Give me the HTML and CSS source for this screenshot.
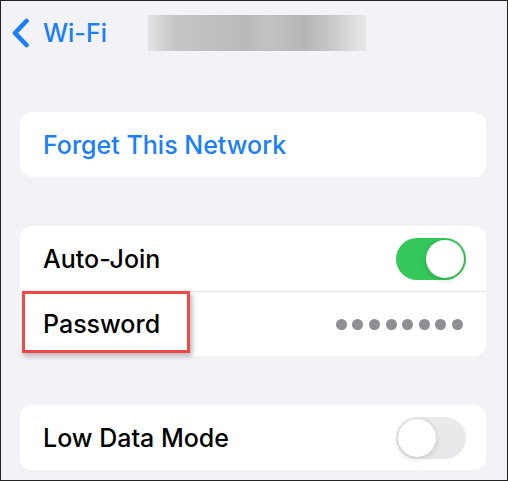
FILE: index.html
```html
<!DOCTYPE html>
<html lang="en">
<head>
    <meta charset="UTF-8">
    <meta name="viewport" content="width=device-width, initial-scale=1.0">
    <title>Wi-Fi Network</title>
    <link rel="stylesheet" href="styles.css">
</head>
<body>
    <div class="screen">
        <div class="nav">
            <a class="back" href="#">
                <svg class="chevron" width="20" height="30" viewBox="0 0 20 30">
                    <path d="M15.5 3 L4 15 L15.5 27" fill="none" stroke="#1a7ff8" stroke-width="4.6" stroke-linecap="round" stroke-linejoin="round"/>
                </svg>
                <span>Wi-Fi</span>
            </a>
            <!-- network name is hidden -->
            <div class="ssid-blur"></div>
        </div>

        <div class="card">
            <div class="row">
                <span class="link">Forget This Network</span>
            </div>
        </div>

        <div class="card card-annotated">
            <div class="row">
                <span class="label">Auto-Join</span>
                <div class="toggle on"><div class="knob"></div></div>
            </div>
            <div class="divider"></div>
            <div class="row row-short">
                <span class="label">Password</span>
                <div class="dots">
                    <i></i><i></i><i></i><i></i><i></i><i></i><i></i><i></i>
                </div>
            </div>
            <div class="highlight"></div>
        </div>

        <div class="card">
            <div class="row">
                <span class="label">Low Data Mode</span>
                <div class="toggle"><div class="knob"></div></div>
            </div>
        </div>
    </div>
</body>
</html>
```

FILE: styles.css
```css
body {
    margin: 0;
    font-family: Inter, "Liberation Sans", sans-serif;
}
.screen {
    width: 508px;
    height: 481px;
    box-sizing: border-box;
    border: 1px solid #222;
    background: #f2f2f7;
    padding: 14px 21px 0 19px;
    overflow: hidden;
}
.nav {
    display: flex;
    align-items: center;
    height: 36px;
    margin-left: -9px;
    margin-bottom: 61px;
}
.back {
    display: flex;
    align-items: center;
    gap: 12px;
    color: #1a7ff8;
    text-decoration: none;
    font-size: 25px;
    font-weight: 500;
    width: 137px;
}
.ssid-blur {
    width: 218px;
    height: 36px;
    background: linear-gradient(90deg, #e2e2e4 0%, #c6c6c8 12%, #bfbfc2 30%, #b9b9bc 45%, #c3c3c6 55%, #b5b5b8 72%, #cacacc 85%, #e8e8ea 100%);
    filter: blur(0.6px);
}
.card {
    background: #fff;
    border-radius: 12px;
    margin-bottom: 49px;
}
.card-annotated {
    position: relative;
    margin-bottom: 49px;
}
.row {
    display: flex;
    align-items: center;
    justify-content: space-between;
    height: 65px;
    padding: 0 20px 0 23px;
}
.row-short {
    height: 64px;
}
.link {
    color: #1a7ff8;
    font-size: 25px;
    font-weight: 500;
}
.label {
    color: #000;
    font-size: 25px;
    font-weight: 500;
}
.divider {
    height: 1px;
    background: #e3e3e8;
    margin-left: 23px;
}
.toggle {
    width: 70px;
    height: 42px;
    border-radius: 21px;
    background: #e9e9eb;
    display: flex;
    align-items: center;
    padding: 0 2px;
    box-sizing: border-box;
}
.toggle.on {
    background: #34c759;
    justify-content: flex-end;
}
.knob {
    width: 38px;
    height: 38px;
    border-radius: 50%;
    background: #fff;
    box-shadow: 0 2px 6px rgba(0, 0, 0, 0.15), 0 0 1px rgba(0, 0, 0, 0.1);
}
.dots {
    display: flex;
    gap: 5.6px;
    margin-right: 3px;
}
.dots i {
    width: 11px;
    height: 11px;
    border-radius: 50%;
    background: #8e8e93;
}
.highlight {
    position: absolute;
    left: 2px;
    top: 65px;
    width: 168px;
    height: 62px;
    box-sizing: border-box;
    border: 3px solid #f04848;
    box-shadow: 2px 3px 5px rgba(0, 0, 0, 0.3);
}
```
